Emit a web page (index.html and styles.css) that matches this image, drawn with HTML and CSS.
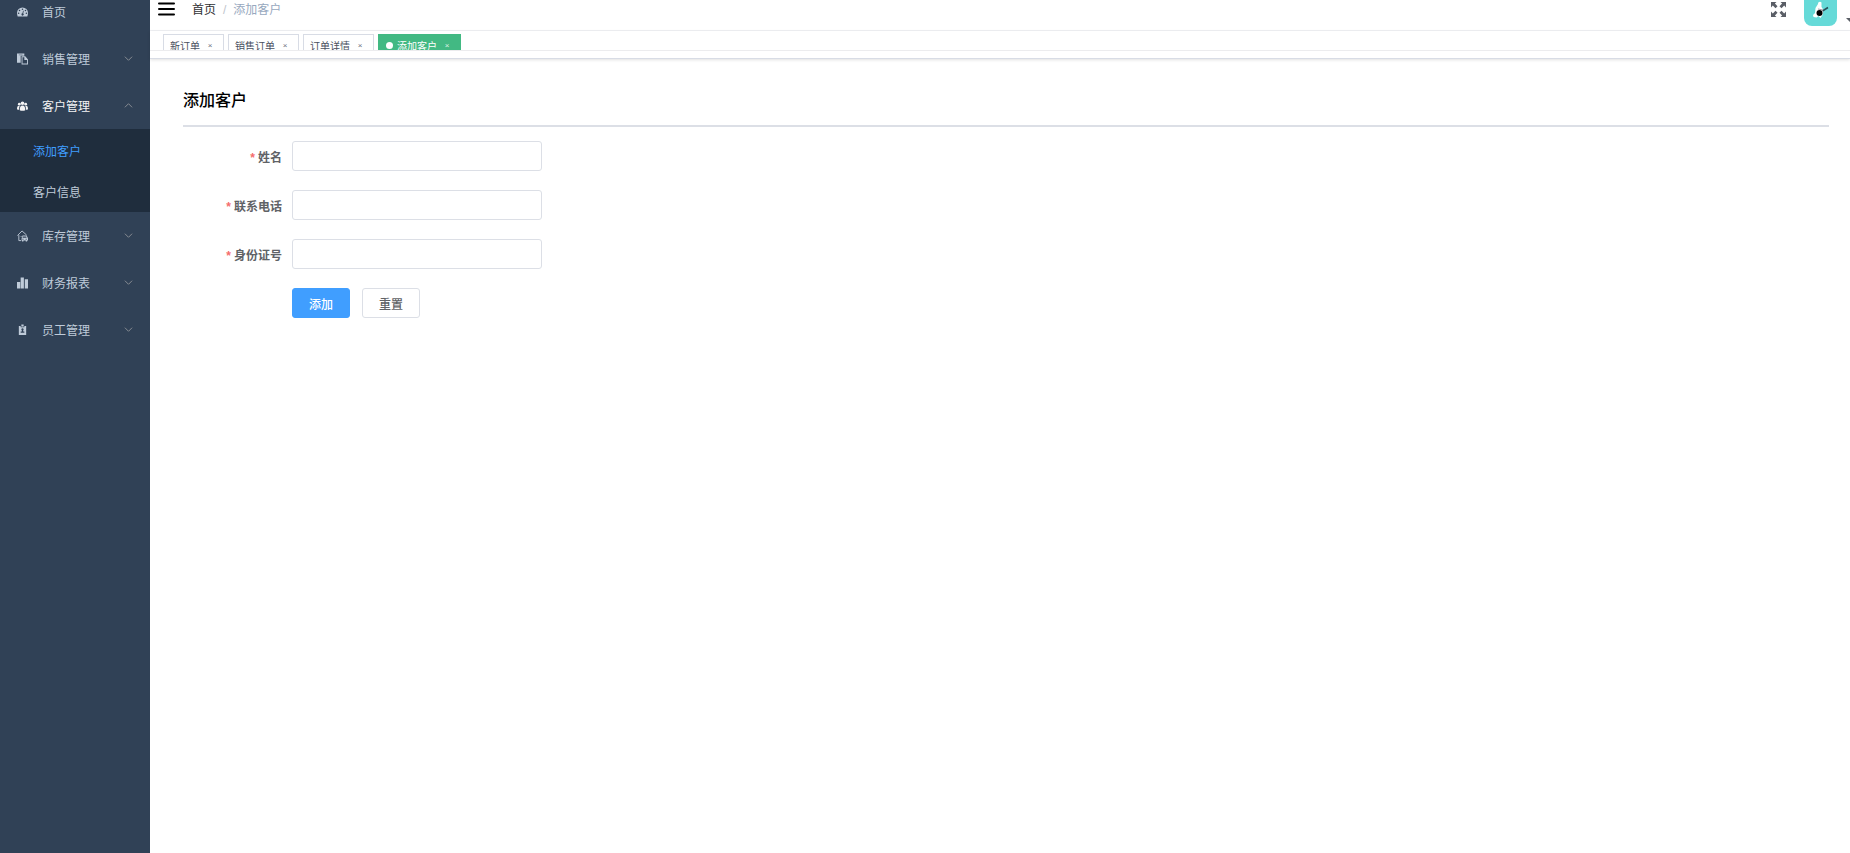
FILE: index.html
```html
<!DOCTYPE html>
<html lang="zh-CN">
<head>
  <meta charset="UTF-8">
  <meta name="viewport" content="width=device-width, initial-scale=1.0">
  <title>添加客户</title>
  <link rel="stylesheet" href="styles.css">
</head>
<body>
  <div class="app">
    <!-- Sidebar -->
    <aside class="sidebar">
      <nav class="menu">
        <a class="menu-item" href="#">
          <svg class="menu-icon" viewBox="0 0 24 24"><path fill-rule="evenodd" d="M12 2A12 12 0 0 0 0 14c0 3 .6 5 1.500 7.600h21C23.400 19 24 17 24 14A12 12 0 0 0 12 2zM12 4.200a1.700 1.700 0 1 1 0 3.400 1.700 1.700 0 0 1 0-3.400zM5.500 7a1.700 1.700 0 1 1 0 3.400 1.700 1.700 0 0 1 0-3.400zM18.500 7a1.700 1.700 0 1 1 0 3.400 1.700 1.700 0 0 1 0-3.400zM3.500 13a1.700 1.700 0 1 1 0 3.400 1.700 1.700 0 0 1 0-3.400zM20.500 13a1.700 1.700 0 1 1 0 3.400 1.700 1.700 0 0 1 0-3.400zM13.200 9l1.600.4-1.200 5.800a2.500 2.500 0 1 1-1.700-.4z"/></svg>
          <span>首页</span>
        </a>
        <a class="menu-item" href="#">
          <svg class="menu-icon" viewBox="0 0 24 24"><path d="M0 0h16v5H8v15H0z"/><path fill-rule="evenodd" d="M10 6h8l6 7v11H10zM12 8v14h10v-8h-6V8z"/><path d="M4 3h8" stroke="#304156" stroke-width="1"/></svg>
          <span>销售管理</span>
          <svg class="arrow" viewBox="0 0 10 10"><path d="M1 3l4 4 4-4"/></svg>
        </a>
        <a class="menu-item opened" href="#">
          <svg class="menu-icon" viewBox="0 0 24 24"><circle cx="12" cy="6" r="4"/><circle cx="5" cy="8" r="3"/><circle cx="19" cy="8" r="3"/><path d="M6 21c0-6 1.500-10 6-10s6 4 6 10c-3 1.500-9 1.500-12 0zM0 19c0-5 1-7.500 5-7.500l1 .5c-1 2-1.500 4-1.500 8C3 20 1 20 0 19zM24 19c0-5-1-7.500-5-7.500l-1 .5c1 2 1.500 4 1.500 8 1.500 0 3.500 0 4.500-1z"/></svg>
          <span>客户管理</span>
          <svg class="arrow" viewBox="0 0 10 10"><path d="M1 7l4-4 4 4"/></svg>
        </a>
        <div class="submenu">
          <a class="submenu-item active" href="#">添加客户</a>
          <a class="submenu-item" href="#">客户信息</a>
        </div>
        <a class="menu-item" href="#">
          <svg class="menu-icon" viewBox="0 0 24 24"><path d="M1 11L11 1l10 9M4 10v12h5M8 13h2" fill="none" stroke="currentColor" stroke-width="2"/><path fill-rule="evenodd" d="M12 11h9l3 6v5h-2v2h-3v-2h-5v2h-3v-2h-1v-5zM13 13l-1 3h9l-1-3zM12 18v2h2v-2zM19 18v2h2v-2z"/></svg>
          <span>库存管理</span>
          <svg class="arrow" viewBox="0 0 10 10"><path d="M1 3l4 4 4-4"/></svg>
        </a>
        <a class="menu-item" href="#">
          <svg class="menu-icon" viewBox="0 0 24 24"><path d="M0 10h7v14H0zM8 0h7v24H8zM17 4h7v20h-7z"/></svg>
          <span>财务报表</span>
          <svg class="arrow" viewBox="0 0 10 10"><path d="M1 3l4 4 4-4"/></svg>
        </a>
        <a class="menu-item" href="#">
          <svg class="menu-icon" viewBox="0 0 24 24"><path fill-rule="evenodd" d="M4 3h4v3h8V3h4v20H4zM12 8a2.500 2.500 0 0 0-1.500 4.500V15H8v3h8v-3h-2.500v-2.500A2.500 2.500 0 0 0 12 8z"/><path d="M9.500 0h5v4.500h-5z"/></svg>
          <span>员工管理</span>
          <svg class="arrow" viewBox="0 0 10 10"><path d="M1 3l4 4 4-4"/></svg>
        </a>
      </nav>
    </aside>

    <div class="main">
      <!-- Navbar -->
      <header class="navbar">
        <button class="hamburger" type="button" aria-label="菜单">
          <svg viewBox="0 0 17 14"><path d="M1 1.500h15M1 7h15M1 12.500h15"/></svg>
        </button>
        <nav class="breadcrumb">
          <a href="#">首页</a>
          <span class="separator">/</span>
          <span>添加客户</span>
        </nav>
        <div class="right-menu">
          <button class="screenfull" type="button" aria-label="全屏">
            <svg viewBox="0 0 15 15"><path d="M0 0h5.500L3.900 1.600l2.600 2.600-2 2-2.700-2.600L0 5.500zM15 0v5.500l-1.800-1.900-2.700 2.600-2-2 2.600-2.600L9.500 0zM0 15V9.500l1.800 1.900 2.700-2.600 2 2-2.600 2.600L5.500 15zM15 15H9.500l1.600-1.600-2.600-2.600 2-2 2.700 2.600L15 9.500z"/></svg>
          </button>
          <button class="avatar" type="button" aria-label="头像">
            <svg viewBox="0 0 33 33"><path d="M14 11c0-2 2-3 3.500-1.500L17.500 14l2 3-1 5-2 3-2-2-2 1.500L9.500 24l-.5-2 2-2 .5-5z" fill="#fff"/><path d="M18.500 18l5.500-3.500" stroke="#28505a" stroke-width="1.500"/><path d="M14 16l5 1" stroke="#a69aa5"/><circle cx="15.500" cy="20" r="3"/></svg>
          </button>
          <span class="caret"></span>
        </div>
      </header>

      <!-- Visited pages -->
      <div class="tags-view">
        <div class="tags-scroll">
          <a class="tag" href="#">新订单 <span class="close">×</span></a>
          <a class="tag" href="#">销售订单 <span class="close">×</span></a>
          <a class="tag" href="#">订单详情 <span class="close">×</span></a>
          <a class="tag active" href="#">添加客户 <span class="close">×</span></a>
        </div>
      </div>

      <main class="content">
        <h1>添加客户</h1>
        <form class="form">
          <div class="form-row">
            <label for="name">姓名</label>
            <input type="text" id="name" required>
          </div>
          <div class="form-row">
            <label for="phone">联系电话</label>
            <input type="text" id="phone" required>
          </div>
          <div class="form-row">
            <label for="idCard">身份证号</label>
            <input type="text" id="idCard" required>
          </div>
          <div class="form-actions">
            <button class="btn primary" type="submit">添加</button>
            <button class="btn" type="reset">重置</button>
          </div>
        </form>
      </main>
    </div>
  </div>
</body>
</html>
```
FILE: styles.css
```css
* {
  box-sizing: border-box;
}

body {
  margin: 0;
  font-family: "Liberation Sans", "Noto Sans CJK SC", sans-serif;
  font-size: 12px;
  color: #303133;
  background: #fff;
}

a {
  color: inherit;
  text-decoration: none;
}

button,
input {
  font: inherit;
}

.app {
  display: flex;
  min-height: 100vh;
  overflow: hidden;
}

/* Sidebar */
.sidebar {
  width: 150px;
  flex-shrink: 0;
  background: #304156;
  color: #bfcbd9;
}

.menu {
  margin-top: -12px;
}

.menu-item {
  display: flex;
  align-items: center;
  height: 47px;
  padding: 0 17px;
}

.menu-item.opened {
  color: #f4f4f5;
}

.menu-icon {
  width: 11px;
  height: 12px;
  margin-right: 14px;
  fill: currentColor;
}

.arrow {
  width: 9px;
  height: 9px;
  margin-left: auto;
  fill: none;
  stroke: #909399;
}

.submenu {
  padding-top: 1px;
  background: #1f2d3d;
}

.submenu-item {
  display: flex;
  align-items: center;
  height: 41px;
  padding-left: 33px;
}

.submenu-item.active {
  color: #409eff;
}

/* Navbar */
.main {
  flex: 1;
  min-width: 0;
}

.navbar {
  display: flex;
  align-items: center;
  height: 44px;
  margin-top: -13px;
  padding-left: 8px;
  border-bottom: 1px solid #f0f1f4;
}

.hamburger,
.screenfull,
.avatar {
  padding: 0;
  border: 0;
  background: none;
  cursor: pointer;
}

.hamburger svg {
  display: block;
  width: 17px;
  height: 14px;
  stroke: #000;
  stroke-width: 2;
  stroke-linecap: round;
}

.breadcrumb {
  display: flex;
  align-items: baseline;
  margin-left: 17px;
  color: #97a8be;
}

.breadcrumb a {
  color: #303133;
}

.separator {
  margin: 0 7px;
  color: #c0c4cc;
}

.right-menu {
  display: flex;
  align-items: center;
  margin-top: 2px;
  margin-left: auto;
}

.screenfull svg {
  display: block;
  width: 15px;
  height: 15px;
  fill: #5a5e66;
}

.avatar {
  width: 33px;
  height: 33px;
  margin: 0 9px 0 18px;
  border-radius: 8px;
  background: #66dad8;
  overflow: hidden;
}

.avatar svg {
  display: block;
}

.caret {
  margin: 20px -4px 0 0;
  border: 4px solid transparent;
  border-top-color: #5a5e66;
  border-bottom: 0;
}

/* Tags */
.tags-view {
  height: 28px;
  border-bottom: 1px solid #d8dce5;
  box-shadow: 0 1px 3px rgba(0, 0, 0, 0.12);
}

.tags-scroll {
  display: flex;
  gap: 4px;
  height: 20px;
  padding: 3px 13px 0;
  border-bottom: 1px solid #ececee;
  overflow: hidden;
}

.tag {
  display: flex;
  align-items: center;
  flex-shrink: 0;
  height: 22px;
  padding: 0 7px 0 6px;
  border: 1px solid #d8dce5;
  font-size: 10px;
  color: #495060;
}

.tag.active {
  border-color: #42b983;
  background: #42b983;
  color: #fff;
}

.tag.active::before {
  content: "";
  width: 7px;
  height: 7px;
  margin: 0 4px 0 1px;
  border-radius: 50%;
  background: #fff;
}

.close {
  width: 12px;
  margin-left: 4px;
  text-align: center;
  font-size: 8px;
  opacity: 0.8;
}

/* Form page */
.content {
  padding: 26px 21px 25px 33px;
}

h1 {
  margin: 0;
  padding-bottom: 8px;
  border-bottom: 2px solid #dcdfe6;
  font-size: 16px;
  line-height: 32px;
  font-weight: 500;
  color: #000;
}

.form {
  margin-top: 14px;
}

.form-row {
  display: flex;
  align-items: center;
  margin-bottom: 19px;
}

.form-row label {
  width: 109px;
  padding-right: 10px;
  text-align: right;
  font-weight: 700;
  color: #606266;
}

.form-row label::before {
  content: "*";
  margin-right: 3px;
  color: #f56c6c;
}

.form-row input {
  width: 250px;
  height: 30px;
  padding: 0 12px;
  border: 1px solid #dcdfe6;
  border-radius: 3px;
  color: #606266;
  outline: none;
}

.form-row input:focus {
  border-color: #409eff;
}

.form-actions {
  display: flex;
  gap: 12px;
  padding-left: 109px;
}

.btn {
  height: 30px;
  padding: 0 16px;
  border: 1px solid #dcdfe6;
  border-radius: 3px;
  background: #fff;
  font-weight: 500;
  color: #606266;
  cursor: pointer;
}

.btn.primary {
  border-color: #409eff;
  background: #409eff;
  color: #fff;
}
```
